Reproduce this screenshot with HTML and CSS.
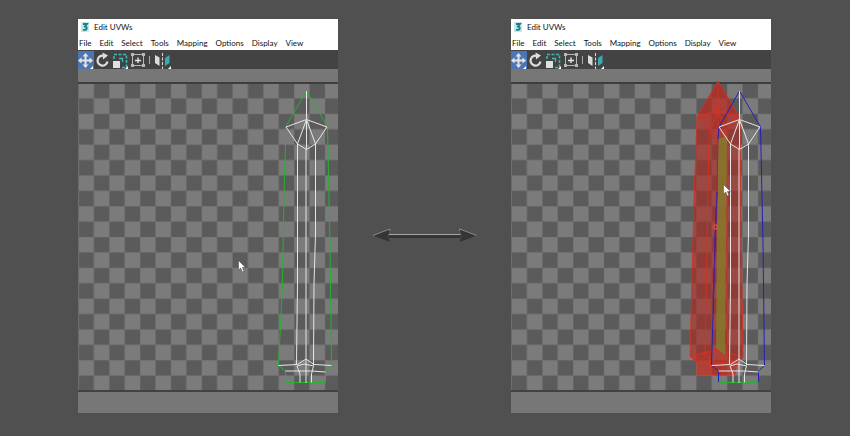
FILE: index.html
```html
<!DOCTYPE html>
<html lang="en">
<head>
<meta charset="utf-8">
<title>Edit UVWs</title>
<link rel="stylesheet" href="styles.css">
</head>
<body>
<svg class="defs" aria-hidden="true">
  <defs>
    <pattern id="checker" x="0.5" y="-1" width="30.8" height="30.8" patternUnits="userSpaceOnUse">
      <rect width="30.8" height="30.8" fill="#7b7b7b"/>
      <path d="M15.4 0H30.8V15.4H15.4zM0 15.4H15.4V30.8H0z" fill="#5b5b5b"/>
      <path d="M0 0H30.8M0 15.4H30.8M0 0V30.8M15.4 0V30.8" stroke="#6e6e6e" stroke-width="1" opacity=".5"/>
    </pattern>
    <symbol id="logo" viewBox="0 0 10 10">
      <rect x="1" width="8" height="10" fill="#c5e8ea"/>
      <path d="M3 2H7L5 4.500Q7.500 5 6.500 7Q5 8.500 3 7.500" fill="none" stroke="#16808c" stroke-width="1.800"/>
    </symbol>
    <symbol id="move" viewBox="0 0 16 18">
      <path d="M7.500 4V15M2 9.500H13" stroke="#e4e4e4" stroke-width="2"/>
      <path d="M7.500 2L10.500 5.500H4.500zM7.500 17L4.500 13.500H10.500zM0 9.500L3.500 6.500V12.500zM15 9.500L11.500 6.500V12.500z" fill="#e4e4e4"/>
      <path d="M15 15V18H12z" fill="#fff"/>
    </symbol>
    <symbol id="rotate" viewBox="0 0 16 18">
      <path d="M10 5.200A5 5 0 1 0 12.500 10.500" fill="none" stroke="#dedede" stroke-width="2.200"/>
      <path d="M7.500 1.500L13 4.500L8 8.500z" fill="#dedede"/>
    </symbol>
    <symbol id="scale" viewBox="0 0 16 18">
      <path d="M2 8V3.500H14.500V16.500H9" fill="none" stroke="#45b5b0" stroke-width="1.500" stroke-dasharray="3 1.500"/>
      <path d="M7 7.500H10.500V11" fill="none" stroke="#45b5b0" stroke-width="1.300"/>
      <rect x="1" y="10" width="7" height="7" fill="#e0e0e0"/>
      <path d="M16 15V18H13z" fill="#fff"/>
    </symbol>
    <symbol id="freeform" viewBox="0 0 16 18">
      <path d="M3.500 3V15M14.500 3V15M3 3.500H15M3 14.500H15" stroke="#b8b8b8"/>
      <path d="M9 6.500V12M6 9.500H12" stroke="#e4e4e4" stroke-width="1.400"/>
      <path d="M2 2h3v3h-3zM13 2h3v3h-3zM2 13h3v3h-3zM13 13h3v3h-3z" fill="#b8b8b8"/>
    </symbol>
    <symbol id="mirror" viewBox="0 0 18 18">
      <path d="M1 4L5.500 6.500V15L1 12z" fill="#dcdcdc"/>
      <path d="M8.500 2V18" stroke="#dcdcdc" stroke-dasharray="3 1.500"/>
      <path d="M11 7L15.500 4V12L11 15z" fill="#38a9b5"/>
      <path d="M17 15V18H14z" fill="#fff"/>
    </symbol>
    <symbol id="pointer" viewBox="0 0 8 13">
      <path d="M.5 .5V10L2.700 8L4.300 12L6 11.300L4.400 7.500H7.500z" fill="#fff" stroke="#444" stroke-width=".5"/>
    </symbol>
    <g id="mesh" fill="none" stroke="#e6e6e6" stroke-width="1">
      <path d="M228.500 7V65M208 43L228.500 35.500L249 43L237.500 60L228.500 65.500L219.500 60ZM228.500 35.500L219.500 60M228.500 35.500L237.500 60"/>
      <path d="M219.500 60V200L218.500 281M228 65V299M237.500 60V150L236 200L235.500 281"/>
      <path d="M200.500 281.500L219.500 280.500L228 275L236 280.500L253.500 281.500M207.500 287H234L247.500 288M219 282L222 290V298.500M235.500 282L233.500 290V298.500M219 282L226 280L236 282"/>
    </g>
  </defs>
</svg>
<main class="comparison">
  <section class="window">
    <header class="titlebar"><svg class="logo" aria-hidden="true"><use href="#logo"/></svg><h2>Edit UVWs</h2></header>
    <nav class="menu">
      <button>File</button><button>Edit</button><button>Select</button><button>Tools</button><button>Mapping</button><button>Options</button><button>Display</button><button>View</button>
    </nav>
    <div class="toolbar">
      <button class="tool active" aria-label="Move"><svg><use href="#move"/></svg></button>
      <button class="tool" aria-label="Rotate"><svg><use href="#rotate"/></svg></button>
      <button class="tool" aria-label="Scale"><svg><use href="#scale"/></svg></button>
      <button class="tool" aria-label="Freeform"><svg><use href="#freeform"/></svg></button>
      <span class="separator"></span>
      <button class="tool wide" aria-label="Mirror"><svg><use href="#mirror"/></svg></button>
    </div>
    <div class="strip"></div>
    <svg class="canvas" viewBox="0 0 260 306" role="img" aria-label="UV layout">
      <rect width="260" height="306" fill="url(#checker)"/>
      <path d="M228.500 7L207.500 43L207.500 60L206 110L204.500 200L200.500 281.500L207.500 287V298.500H247.500V287L253.500 281.500L252 160L249.500 43Z" fill="none" stroke="#25b232"/>
      <use href="#mesh"/>
      <use href="#pointer" x="160" y="176" width="8" height="13"/>
    </svg>
    <footer class="status"></footer>
  </section>

  <svg class="arrow" viewBox="0 0 106 20" aria-hidden="true">
    <path d="M17 10.500H89" stroke="#353535" stroke-width="3"/>
    <path d="M17 8.500H89" stroke="#aaa"/>
    <path d="M1 9.500L18 3L16 9.500L18 16zM105 9.500L88 3L90 9.500L88 16z" fill="#353535"/>
    <path d="M1 9.500L18 3V5M88 5V3L105 9.500" fill="none" stroke="#999" stroke-width=".8"/>
  </svg>

  <section class="window">
    <header class="titlebar"><svg class="logo" aria-hidden="true"><use href="#logo"/></svg><h2>Edit UVWs</h2></header>
    <nav class="menu">
      <button>File</button><button>Edit</button><button>Select</button><button>Tools</button><button>Mapping</button><button>Options</button><button>Display</button><button>View</button>
    </nav>
    <div class="toolbar">
      <button class="tool active" aria-label="Move"><svg><use href="#move"/></svg></button>
      <button class="tool" aria-label="Rotate"><svg><use href="#rotate"/></svg></button>
      <button class="tool" aria-label="Scale"><svg><use href="#scale"/></svg></button>
      <button class="tool" aria-label="Freeform"><svg><use href="#freeform"/></svg></button>
      <span class="separator"></span>
      <button class="tool wide" aria-label="Mirror"><svg><use href="#mirror"/></svg></button>
    </div>
    <div class="strip"></div>
    <svg class="canvas" viewBox="0 0 260 306" role="img" aria-label="UV layout with a selected shell">
      <rect width="260" height="306" fill="url(#checker)"/>
      <path d="M207 -3L186 33L183 116L179 272L186 279V291H224L226 280L232 273L230 130L229 34Z" fill="#b0281c" fill-opacity=".6" stroke="#d93020" stroke-width=".8"/>
      <path d="M207 -3L186 33L198 51L207 60L216 51L229 34Z" fill="#d8261c" fill-opacity=".28"/>
      <path d="M198 51L194 274M216 51V272M186 33L207 26L229 34M207 -3V53M207 26L198 51M207 26L216 51M179 272L207 266L232 273M186 279H226M198 272L201 291M212 272V291" fill="none" stroke="#e03022" stroke-width=".8"/>
      <path d="M207 55L216 52L214 271L205 264Z" fill="#86782e" fill-opacity=".88"/>
      <path d="M179 272L205 264L214 272L232 273L226 280L224 291H186V279Z" fill="#f02a1c" fill-opacity=".25"/>
      <path d="M228.500 7L208 43L207 55M206 108L204 150L203 200L200.500 281.500L207.500 287V298M247.500 298V287L253.500 281.500L252 160L249.500 43L228.500 7" fill="none" stroke="#2320b4"/>
      <path d="M207 55L206 108L204 170L202 215" fill="none" stroke="#a51e4c"/>
      <path d="M206 108L204 170L202 215" fill="none" stroke="#3a20a8" stroke-width=".8"/>
      <path d="M208 298.500H247" stroke="#25b232"/>
      <use href="#mesh"/>
      <path d="M203 141H206V145H203z" fill="none" stroke="#f05545"/>
      <use href="#pointer" x="212" y="100" width="8" height="13"/>
    </svg>
    <footer class="status"></footer>
  </section>
</main>
</body>
</html>
```
FILE: styles.css
```css
* { box-sizing: border-box; }

body {
  margin: 0;
  background: #505050;
  color: #111;
  font-family: Lato, "Noto Sans", sans-serif;
  font-size: 8px;
}

.defs {
  position: absolute;
  width: 0;
  height: 0;
}

.comparison {
  display: grid;
  grid-template-columns: 78fr 260fr 173fr 260fr 79fr;
  align-items: start;
  padding: 19px 0;
}

.window:first-child { grid-column: 2; }

.titlebar,
.menu {
  display: flex;
  align-items: center;
  background: #fff;
}

.titlebar {
  gap: 4px;
  height: 16px;
  padding-left: 2px;
}

.titlebar h2 {
  margin: 0;
  font-size: 8px;
  font-weight: 400;
}

.logo {
  width: 10px;
  height: 10px;
}

.menu {
  gap: 8px;
  height: 15px;
  padding-left: 1px;
}

button {
  padding: 0;
  border: 0;
  background: none;
  color: inherit;
  font: inherit;
}

.toolbar {
  display: flex;
  align-items: center;
  gap: 1px;
  height: 19px;
  background: #434343;
}

.tool {
  width: 16px;
  height: 18px;
}

.tool.wide { width: 18px; }

.tool.active { background: #4c76b3; }

.tool svg {
  display: block;
  width: 100%;
  height: 100%;
}

.separator {
  width: 1px;
  height: 8px;
  margin: 0 3px;
  background: #aaa;
}

.strip {
  height: 15px;
  background: #777;
  border-bottom: 2px solid #3d3d3d;
}

.canvas {
  display: block;
  width: 100%;
  height: auto;
  overflow: visible;
}

.status {
  height: 23px;
  background: #777;
  border-top: 2px solid #424242;
}

.arrow {
  width: 61%;
  align-self: center;
  justify-self: center;
  margin-top: 40px;
}
```
